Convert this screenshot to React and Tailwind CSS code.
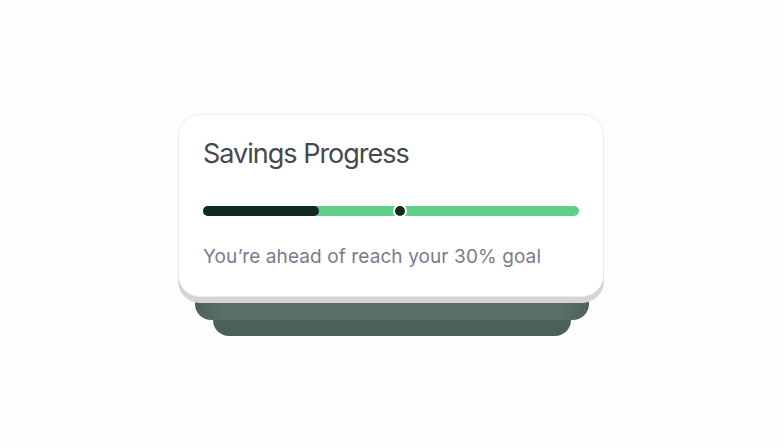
import React from 'react';

const ProgressBar = ({ done = 116, marker = 197 }) => {
  return (
    <div className="relative h-[10px] w-full rounded-full bg-[#5fd085]">
      <div className="absolute left-0 top-0 h-full rounded-full bg-[#112b22]" style={{ width: done }} />
      <div
        className="absolute top-1/2 h-[14px] w-[14px] -translate-x-1/2 -translate-y-1/2 rounded-full border-2 border-white bg-[#112b22]"
        style={{ left: marker }}
      />
    </div>
  );
};

const App = () => {
  return (
    <div
      className="flex h-[448px] w-[784px] flex-col items-center justify-center bg-[#fdfdfb] pt-[2px]"
      style={{ fontFamily: 'Inter, "Noto Sans", sans-serif' }}
    >
      <div className="relative z-20 -ml-[2px] w-[426px] rounded-[22px] border border-[#ececec] bg-white px-6 pt-[25px] pb-[30px] shadow-[0_6px_0_#d5d5d5]">
        <h2 className="text-[27px] leading-none font-normal tracking-[-1px] text-[#47474f]">Savings Progress</h2>
        <div className="mt-[39px]">
          <ProgressBar />
        </div>
        <p className="mt-[31px] text-[19px] leading-none tracking-[0.1px] text-[#7a7a90]">You’re ahead of reach your 30% goal</p>
      </div>
      <div className="relative z-10 -mt-[22px] h-[45px] w-[394px] rounded-b-[16px] bg-[linear-gradient(90deg,#4d635a_0%,#5b7068_8%,#5b7068_92%,#4d635a_100%)]" />
      <div className="relative z-0 -mt-[20px] h-[36px] w-[358px] rounded-b-[16px] bg-[#4a6158]" />
    </div>
  );
};

export default App;
